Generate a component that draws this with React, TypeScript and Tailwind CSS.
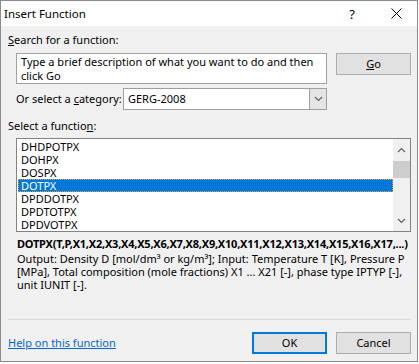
import React from "react";

const font = { fontFamily: '"Noto Sans", "Liberation Sans", sans-serif' };

function Chevron({ up = false }: { up?: boolean }) {
  return (
    <svg width="9" height="6" viewBox="0 0 9 6" className="block">
      <path d={up ? "M1 5 L4.5 1.5 L8 5" : "M1 1 L4.5 4.5 L8 1"} fill="none" stroke="#606060" strokeWidth="1.2" />
    </svg>
  );
}

const items = ["DHDPOTPX", "DOHPX", "DOSPX", "DOTPX", "DPDDOTPX", "DPDTOTPX", "DPDVOTPX"];

export default function App() {
  return (
    <div className="w-[419px] h-[364px] bg-white text-[11px] text-black" style={font}>
      <div className="w-[418px] h-[362px] border border-[#8c8c8c] bg-[#f0f0f0] flex flex-col">
        {/* Title bar */}
        <div className="h-[25px] bg-white flex items-center pl-[3px] pr-[15px]">
          <span className="flex-1 text-[11.5px] leading-[16px]">Insert Function</span>
          <span className="mr-[36px] text-[13px] leading-[16px]">?</span>
          <svg width="11" height="11" viewBox="0 0 11 11">
            <path d="M0.5 0.5 L10.5 10.5 M10.5 0.5 L0.5 10.5" stroke="#000" strokeWidth="1" />
          </svg>
        </div>

        <div className="flex-1 flex flex-col pl-[7px] pr-[6px]">
          <div className="mt-[6px] leading-[16px]">
            <span className="underline">S</span>earch for a function:
          </div>

          <div className="mt-[5px] flex gap-[9px] pl-[8px]">
            <div className="flex-1 flex flex-col gap-[4px]">
              <div className="h-[31px] border border-[#a0a0a0] bg-white pl-[4px] pr-[4px] leading-[14px] pt-[1px]">
                Type a brief description of what you want to do and then click Go
              </div>
              <div className="flex items-center h-[22px]">
                <span className="leading-[16px] w-[107px] whitespace-nowrap">
                  Or select a <span className="underline">c</span>ategory:
                </span>
                <div className="flex-1 h-[22px] border border-[#a0a0a0] bg-white flex">
                  <span className="flex-1 pl-[4px] leading-[20px]">GERG-2008</span>
                  <div className="w-[17px] bg-[#e5e5e5] border-l border-[#a0a0a0] flex items-center justify-center">
                    <Chevron />
                  </div>
                </div>
              </div>
            </div>
            <div className="w-[75px] h-[22px] border border-[#adadad] bg-[#e1e1e1] flex items-center justify-center leading-[16px]">
              <span><span className="underline">G</span>o</span>
            </div>
          </div>

          <div className="mt-[8px] leading-[16px]">
            Select a functio<span className="underline">n</span>:
          </div>

          <div className="mt-[4px] ml-[8px] h-[94px] border border-[#828282] bg-white flex">
            <div className="flex-1 pt-[1px] pl-[1px]">
              {items.map((it) => (
                <div
                  key={it}
                  className={
                    it === "DOTPX"
                      ? "h-[13px] leading-[13px] pl-[3px] bg-[#0078d7] text-white outline outline-1 outline-dotted outline-[#e8a040] -outline-offset-1"
                      : "h-[13px] leading-[13px] pl-[3px]"
                  }
                >
                  {it}
                </div>
              ))}
            </div>
            <div className="w-[17px] bg-[#f0f0f0] flex flex-col items-center">
              <div className="h-[22px] flex items-center justify-center">
                <Chevron up />
              </div>
              <div className="w-[17px] h-[17px] bg-[#cdcdcd]" />
              <div className="flex-1" />
              <div className="h-[20px] flex items-center justify-center">
                <Chevron />
              </div>
            </div>
          </div>

          <div className="mt-[4px] pl-[9px] font-bold leading-[16px] whitespace-nowrap tracking-[-0.22px]">
            DOTPX(T,P,X1,X2,X3,X4,X5,X6,X7,X8,X9,X10,X11,X12,X13,X14,X15,X16,X17,...)
          </div>
          <div className="pl-[9px] leading-[13px] pt-[0px]">
            Output: Density D [mol/dm³ or kg/m³]; Input: Temperature T [K], Pressure P [MPa], Total composition (mole fractions) X1 ... X21 [-], phase type IPTYP [-], unit IUNIT [-].
          </div>

          <div className="mt-auto border-t border-[#dadada]" />
          <div className="h-[12px]" />
          <div className="flex items-center mb-[7px]">
            <span className="flex-1 text-[#0066cc] underline leading-[16px]">Help on this function</span>
            <div className="w-[75px] h-[22px] border-2 border-[#0078d7] bg-[#e1e1e1] flex items-center justify-center leading-[16px]">
              OK
            </div>
            <div className="ml-[9px] w-[75px] h-[22px] border border-[#adadad] bg-[#e1e1e1] flex items-center justify-center leading-[16px]">
              Cancel
            </div>
          </div>
        </div>
      </div>
    </div>
  );
}
